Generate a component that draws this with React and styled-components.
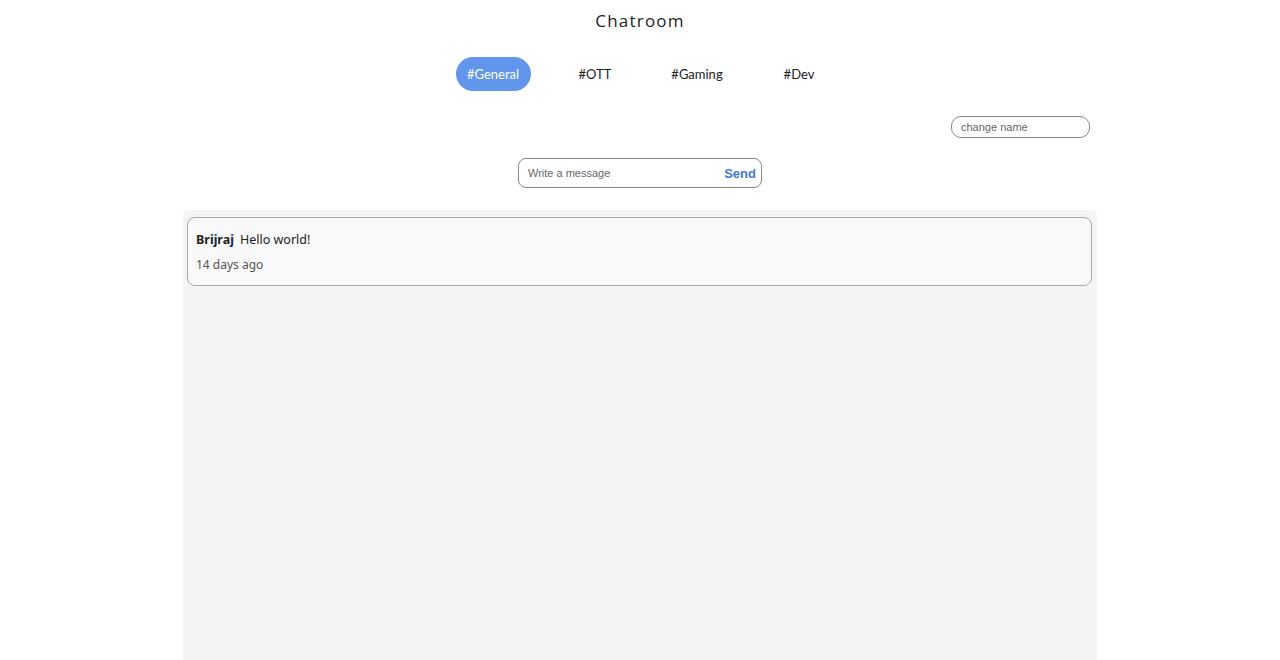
import React, { useState } from "react";
import styled, { createGlobalStyle } from "styled-components";

const GlobalStyle = createGlobalStyle`
  html, body {
    margin: 0;
    padding: 0;
    background: #fff;
    font-family: "Noto Sans", "Open Sans", sans-serif;
  }
`;

const channels = ["General", "OTT", "Gaming", "Dev"];

const messages = [{ name: "Brijraj", text: "Hello world!", time: "14 days ago" }];

const App = () => {
  const [active, setActive] = useState("General");

  return (
    <>
      <GlobalStyle />
      <Page>
        <Title>Chatroom</Title>
        <Tabs>
          {channels.map((c) => (
            <Tab key={c} $active={active === c} onClick={() => setActive(c)}>
              #{c}
            </Tab>
          ))}
        </Tabs>
        <NameRow>
          <NameInput placeholder="change name" />
        </NameRow>
        <Composer>
          <MessageInput placeholder="Write a message" />
          <SendButton>Send</SendButton>
        </Composer>
        <ChatBox>
          {messages.map((m, i) => (
            <Card key={i}>
              <Line>
                <Author>{m.name}</Author>
                <Body>{m.text}</Body>
              </Line>
              <Time>{m.time}</Time>
            </Card>
          ))}
        </ChatBox>
      </Page>
    </>
  );
};

const Page = styled.div`
  display: flex;
  flex-direction: column;
  align-items: center;
  min-height: 660px;
`;

const Title = styled.h1`
  margin: 10px 0 0;
  font-family: "Open Sans", sans-serif;
  font-weight: 400;
  font-size: 17px;
  letter-spacing: 1.2px;
  color: #222;
  line-height: 22px;
`;

const Tabs = styled.ul`
  display: flex;
  gap: 27px;
  margin: 25px 0 0;
  padding: 0 0 0 12px;
  list-style: none;
`;

const Tab = styled.li`
  width: 75px;
  height: 34px;
  display: flex;
  align-items: center;
  justify-content: center;
  border-radius: 17px;
  font-family: "Lato", sans-serif;
  font-size: 13px;
  cursor: pointer;
  color: ${(p) => (p.$active ? "#fff" : "#222")};
  background: ${(p) => (p.$active ? "#6196ec" : "transparent")};
`;

const NameRow = styled.div`
  width: 914px;
  display: flex;
  justify-content: flex-end;
  margin-top: 25px;
`;

const NameInput = styled.input`
  width: 139px;
  height: 22px;
  box-sizing: border-box;
  margin-right: 7px;
  border: 1px solid #888;
  border-radius: 10px;
  padding: 0 9px;
  font-family: "Liberation Sans", Arial, sans-serif;
  font-size: 11px;
  outline: none;
  &::placeholder {
    color: #666;
  }
`;

const Composer = styled.div`
  width: 244px;
  height: 30px;
  box-sizing: border-box;
  margin-top: 20px;
  display: flex;
  align-items: center;
  border: 1px solid #888;
  border-radius: 8px;
  padding: 0 5px 0 9px;
`;

const MessageInput = styled.input`
  flex: 1;
  border: none;
  outline: none;
  background: transparent;
  padding: 0;
  font-family: "Liberation Sans", Arial, sans-serif;
  font-size: 11px;
  &::placeholder {
    color: #666;
  }
`;

const SendButton = styled.button`
  border: none;
  background: none;
  padding: 0;
  font-family: "Liberation Sans", Arial, sans-serif;
  font-weight: 700;
  font-size: 13px;
  color: #3b7bd4;
  cursor: pointer;
`;

const ChatBox = styled.div`
  width: 914px;
  flex: 1;
  margin-top: 22px;
  box-sizing: border-box;
  background: #f4f4f4;
  border-radius: 6px 6px 0 0;
  padding: 7px 4px;
  display: flex;
  flex-direction: column;
  gap: 6px;
`;

const Card = styled.div`
  background: #f9f9f9;
  border: 1px solid #a8a8a8;
  border-radius: 8px;
  padding: 13px 8px 12px;
  margin-right: 1px;
`;

const Line = styled.div`
  display: flex;
  gap: 6px;
  font-size: 12.5px;
  line-height: 18px;
  color: #222;
`;

const Author = styled.span`
  font-weight: 700;
`;

const Body = styled.span``;

const Time = styled.div`
  margin-top: 8px;
  font-size: 12px;
  line-height: 16px;
  color: #555;
`;

export default App;
